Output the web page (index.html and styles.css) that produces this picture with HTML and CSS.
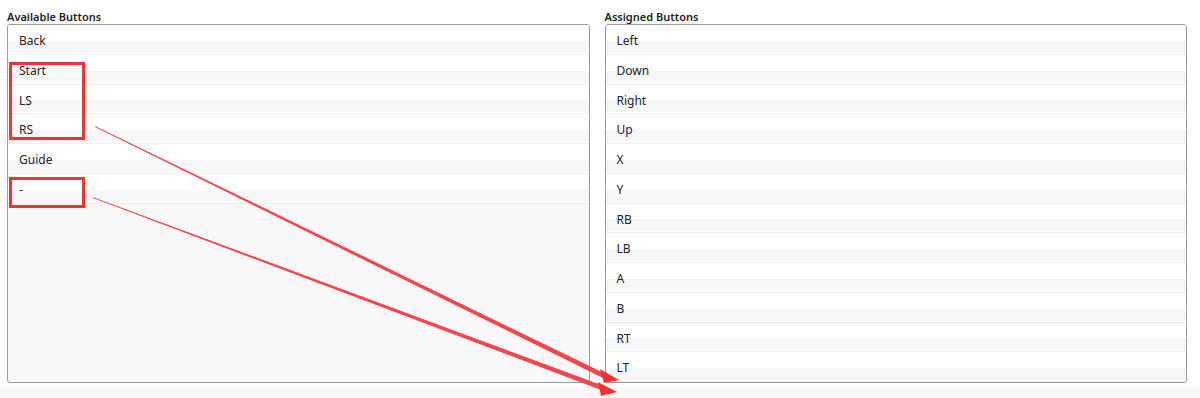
FILE: index.html
```html
<!DOCTYPE html>
<html lang="en">
<head>
    <meta charset="UTF-8">
    <meta name="viewport" content="width=device-width, initial-scale=1.0">
    <title>Button Mapping</title>
    <link rel="stylesheet" href="styles.css">
</head>
<body>
    <div class="page">
        <div class="columns">
            <div class="panel">
                <div class="label">Available Buttons</div>
                <div class="list list-available">
                    <div class="item">Back</div>
                    <div class="item">Start</div>
                    <div class="item">LS</div>
                    <div class="item">RS</div>
                    <div class="item">Guide</div>
                    <div class="item">-</div>
                </div>
            </div>
            <div class="panel">
                <div class="label">Assigned Buttons</div>
                <div class="list">
                    <div class="item">Left</div>
                    <div class="item">Down</div>
                    <div class="item">Right</div>
                    <div class="item">Up</div>
                    <div class="item">X</div>
                    <div class="item">Y</div>
                    <div class="item">RB</div>
                    <div class="item">LB</div>
                    <div class="item">A</div>
                    <div class="item">B</div>
                    <div class="item">RT</div>
                    <div class="item">LT</div>
                </div>
            </div>
        </div>
        <div class="footer"></div>

        <!-- annotation layer -->
        <svg class="marks" width="1200" height="398" viewBox="0 0 1200 398">
            <rect x="10.5" y="63.5" width="73" height="75" fill="none" stroke="#ee3436" stroke-width="3"/>
            <rect x="10.5" y="178.5" width="73" height="28" fill="none" stroke="#ee3436" stroke-width="3"/>
            <polygon points="95,127 95.6,126.2 606,374 604,378.5" fill="#f0474a"/>
            <polygon points="619,380 600,369 604,383" fill="#ee3436"/>
            <polygon points="93,198 93.4,197.2 604,386 602.5,390.5" fill="#f0474a"/>
            <polygon points="617,392 598,382 601,396" fill="#ee3436"/>
        </svg>
    </div>
</body>
</html>
```

FILE: styles.css
```css
html, body{
    margin: 0;
    height: 100%;
    overflow: hidden;
}
body{
    background: #fff;
    font-family: "Noto Sans", "Open Sans", sans-serif;
    font-size: 12px;
    color: #222;
}
.page{
    position: relative;
    width: 1200px;
    height: 398px;
}
.columns{
    display: flex;
    gap: 15px;
    padding: 9px 13px 0 7px;
}
.panel{
    flex: 1;
    display: flex;
    flex-direction: column;
}
.label{
    font-weight: 600;
    font-size: 11px;
    line-height: 15px;
    color: #222;
}
.list{
    height: 357px;
    border: 1px solid #9a9a9a;
    border-radius: 3px;
    background: #fff;
    overflow: hidden;
}
.list-available{
    background: #f8f8fa;
}
.item{
    height: 29.75px;
    box-sizing: border-box;
    padding-left: 11px;
    padding-top: 1px;
    line-height: 30px;
    background: linear-gradient(#fff 0, #fff 55%, #f7f7f9 55%, #f7f7f9 95%, #fff 95%);
    border-bottom: 1px solid #efeff2;
}
.footer{
    margin-top: 4px;
    height: 12px;
    background: #f8f8fa;
}
.marks{
    position: absolute;
    left: 0;
    top: 0;
    pointer-events: none;
}
```
